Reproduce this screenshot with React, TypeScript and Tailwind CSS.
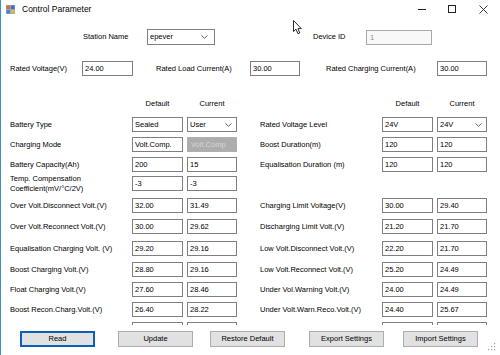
import React from "react";

type Kind = "text" | "select" | "disabled";

interface Field {
  label: string;
  def: string;
  cur: string;
  kind?: Kind;
}

interface Row {
  h: string;
  left?: Field;
  right?: Field;
}

const rows: Row[] = [
  {
    h: "h-[20px]",
    left: { label: "Battery Type", def: "Sealed", cur: "User", kind: "select" },
    right: { label: "Rated Voltage Level", def: "24V", cur: "24V", kind: "select" },
  },
  {
    h: "h-[20px]",
    left: { label: "Charging Mode", def: "Volt.Comp.", cur: "Volt.Comp", kind: "disabled" },
    right: { label: "Boost Duration(m)", def: "120", cur: "120" },
  },
  {
    h: "h-[19px]",
    left: { label: "Battery Capacity(Ah)", def: "200", cur: "15" },
    right: { label: "Equalisation Duration (m)", def: "120", cur: "120" },
  },
  {
    h: "h-[22px]",
    left: { label: "Temp. Compensation\nCoefficient(mV/°C/2V)", def: "-3", cur: "-3" },
  },
  {
    h: "h-[21px]",
    left: { label: "Over Volt.Disconnect Volt.(V)", def: "32.00", cur: "31.49" },
    right: { label: "Charging Limit Voltage(V)", def: "30.00", cur: "29.40" },
  },
  {
    h: "h-[22px]",
    left: { label: "Over Volt.Reconnect Volt.(V)", def: "30.00", cur: "29.62" },
    right: { label: "Discharging Limit Volt.(V)", def: "21.20", cur: "21.70" },
  },
  {
    h: "h-[21px]",
    left: { label: "Equalisation Charging Volt. (V)", def: "29.20", cur: "29.16" },
    right: { label: "Low Volt.Disconnect Volt.(V)", def: "22.20", cur: "21.70" },
  },
  {
    h: "h-[20px]",
    left: { label: "Boost Charging Volt.(V)", def: "28.80", cur: "29.16" },
    right: { label: "Low Volt.Reconnect Volt.(V)", def: "25.20", cur: "24.49" },
  },
  {
    h: "h-[20px]",
    left: { label: "Float Charging Volt.(V)", def: "27.60", cur: "28.46" },
    right: { label: "Under Vol.Warning Volt.(V)", def: "24.00", cur: "24.49" },
  },
  {
    h: "h-[20px]",
    left: { label: "Boost Recon.Charg.Volt.(V)", def: "26.40", cur: "28.22" },
    right: { label: "Under Volt.Warn.Reco.Volt.(V)", def: "24.40", cur: "25.67" },
  },
  // next row, scrolled mostly out of view: only the box tops show
  {
    h: "h-[20px]",
    left: { label: "", def: "", cur: "" },
    right: { label: "", def: "", cur: "" },
  },
];

function Chevron() {
  return (
    <svg width="7" height="4" viewBox="0 0 7 4" className="shrink-0">
      <path d="M0.5 0.5 L3.5 3.3 L6.5 0.5" fill="none" stroke="#555" strokeWidth="0.9" />
    </svg>
  );
}

function TextBox({ value, className = "" }: { value: string; className?: string }) {
  return (
    <div
      className={`h-[15px] border border-[#7f7f7f] bg-white pl-[2px] text-[7.5px] leading-[13px] text-black whitespace-nowrap overflow-hidden ${className}`}
    >
      {value}
    </div>
  );
}

function Combo({ value, className = "" }: { value: string; className?: string }) {
  return (
    <div
      className={`h-[15px] border border-[#7f7f7f] bg-white pl-[2px] pr-[4px] flex items-center justify-between text-[7.5px] text-black ${className}`}
    >
      <span>{value}</span>
      <Chevron />
    </div>
  );
}

function DisabledCombo({ value, className = "" }: { value: string; className?: string }) {
  return (
    <div
      className={`h-[15px] border border-[#b0b0b0] bg-[#adadad] pl-[3px] text-[7.5px] leading-[13px] text-[#d6d6d6] ${className}`}
    >
      {value}
    </div>
  );
}

function Group({ field }: { field?: Field }) {
  if (!field) return <div className="w-[227px]" />;
  const multi = field.label.includes("\n");
  return (
    <div className="w-[227px] flex items-start">
      <div className="w-[122px] h-[15px] flex items-center">
        <span
          className={`text-[7.5px] text-black whitespace-pre ${multi ? "leading-[10px]" : "leading-[15px]"}`}
        >
          {field.label}
        </span>
      </div>
      <TextBox value={field.def} className="w-[51px]" />
      {field.kind === "select" ? (
        <Combo value={field.cur} className="ml-[4px] w-[50px]" />
      ) : field.kind === "disabled" ? (
        <DisabledCombo value={field.cur} className="ml-[4px] w-[50px]" />
      ) : (
        <TextBox value={field.cur} className="ml-[4px] w-[50px]" />
      )}
    </div>
  );
}

function Header() {
  return (
    <div className="w-[227px] flex items-center">
      <div className="w-[122px]" />
      <div className="w-[51px] text-center">Default</div>
      <div className="ml-[4px] w-[50px] text-center">Current</div>
    </div>
  );
}

function Button({ label, className = "", focused = false }: { label: string; className?: string; focused?: boolean }) {
  return (
    <div
      className={`h-[16px] flex items-center justify-center bg-[#e1e1e1] text-[7.5px] text-black ${
        focused ? "border-2 border-[#0a5fb8]" : "border border-[#adadad]"
      } ${className}`}
    >
      {label}
    </div>
  );
}

export default function App() {
  return (
    <div className="relative w-[500px] h-[355px] overflow-hidden bg-white border-l border-[#3b93bf] font-['Liberation_Sans',Arial,sans-serif] text-[7.5px] text-black select-none">
      {/* title bar */}
      <div className="h-[18px] flex items-center pl-[5px]">
        <svg width="9" height="9" viewBox="0 0 9 9">
          <rect x="0" y="0" width="9" height="9" fill="#8fa9c9" />
          <rect x="0.5" y="0.5" width="3.5" height="3.5" fill="#e06a2a" />
          <rect x="5" y="0.5" width="3.5" height="3.5" fill="#3c6fb4" />
          <rect x="0.5" y="5" width="3.5" height="3.5" fill="#4a86c8" />
          <rect x="5" y="5" width="3.5" height="3.5" fill="#f0b23a" />
        </svg>
        <span className="ml-[7px] text-[8.5px]">Control Parameter</span>
        <div className="ml-auto flex items-center h-full">
          <div className="w-[30px] h-full flex items-center justify-center">
            <div className="w-[8px] h-px bg-[#222]" />
          </div>
          <div className="w-[30px] h-full flex items-center justify-center">
            <div className="w-[8px] h-[8px] border border-[#222]" />
          </div>
          <div className="w-[33px] h-full flex items-center justify-center">
            <svg width="9" height="9" viewBox="0 0 9 9">
              <path d="M0.5 0.5 L8.5 8.5 M8.5 0.5 L0.5 8.5" stroke="#222" strokeWidth="0.9" />
            </svg>
          </div>
        </div>
      </div>

      {/* station / device */}
      <div className="mt-[11px] h-[16px] flex items-center pl-[82px]">
        <div className="w-[64px]">Station Name</div>
        <Combo value="epever" className="w-[68px] h-[16px] pr-[6px]" />
        <div className="ml-[98px] w-[53px]">Device ID</div>
        <div className="w-[66px] h-[15px] border border-[#a9a9a9] bg-[#f8f8f8] pl-[3px] leading-[13px] text-[#8c8c8c]">
          1
        </div>
      </div>

      {/* rated values */}
      <div className="mt-[16px] h-[15px] flex items-center pl-[9px]">
        <div className="w-[72px]">Rated Voltage(V)</div>
        <TextBox value="24.00" className="w-[51px]" />
        <div className="ml-[23px] w-[94px]">Rated Load Current(A)</div>
        <TextBox value="30.00" className="w-[50px]" />
        <div className="ml-[26px] w-[111px]">Rated Charging Current(A)</div>
        <TextBox value="30.00" className="w-[50px]" />
      </div>

      {/* column headers */}
      <div className="mt-[21px] h-[13px] flex items-center pl-[9px]">
        <Header />
        <div className="ml-[23px]">
          <Header />
        </div>
      </div>

      {/* parameter grid */}
      <div className="mt-[7px] h-[208px] overflow-hidden">
        {rows.map((row, i) => (
          <div key={i} className={`${row.h} flex items-start pl-[9px]`}>
            <Group field={row.left} />
            <div className="ml-[23px]">
              <Group field={row.right} />
            </div>
          </div>
        ))}
      </div>

      {/* buttons */}
      <div className="h-[30px] pt-[6px] flex items-start pl-[19px]">
        <Button label="Read" focused className="w-[75px]" />
        <Button label="Update" className="ml-[23px] w-[75px]" />
        <Button label="Restore Default" className="ml-[17px] w-[75px]" />
        <Button label="Export Settings" className="ml-[24px] w-[75px]" />
        <Button label="Import Settings" className="ml-[19px] w-[75px]" />
      </div>

      {/* resize grip */}
      <svg className="absolute right-[4px] bottom-[4px]" width="8" height="8" viewBox="0 0 8 8">
        <rect x="6" y="0" width="1.2" height="1.2" fill="#a0a0a0" />
        <rect x="3" y="3" width="1.2" height="1.2" fill="#a0a0a0" />
        <rect x="6" y="3" width="1.2" height="1.2" fill="#a0a0a0" />
        <rect x="0" y="6" width="1.2" height="1.2" fill="#a0a0a0" />
        <rect x="3" y="6" width="1.2" height="1.2" fill="#a0a0a0" />
        <rect x="6" y="6" width="1.2" height="1.2" fill="#a0a0a0" />
      </svg>

      {/* mouse cursor */}
      <svg className="absolute left-[292px] top-[20px]" width="10" height="15" viewBox="0 0 10 15">
        <path
          d="M0.5 0.5 L0.5 11.5 L3 9.2 L5 13.8 L6.8 13 L4.9 8.6 L8.3 8.6 Z"
          fill="#fff"
          stroke="#111"
          strokeWidth="0.9"
          strokeLinejoin="round"
        />
      </svg>
    </div>
  );
}
